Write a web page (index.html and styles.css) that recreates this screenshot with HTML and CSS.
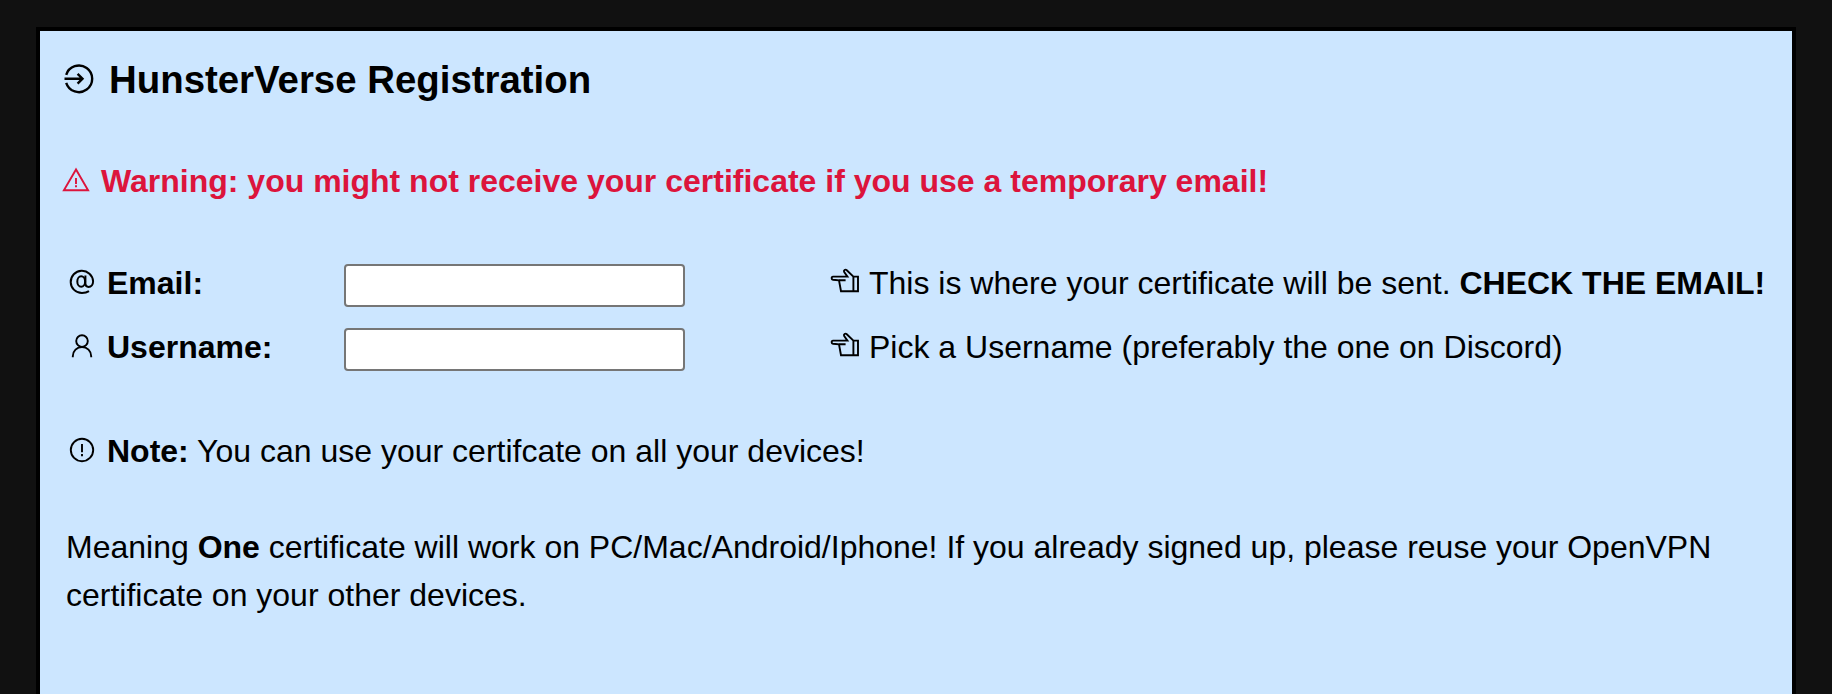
FILE: index.html
```
<!DOCTYPE html>
<html lang="en">
<head>
  <meta charset="UTF-8">
  <meta name="viewport" content="width=device-width, initial-scale=1.0">
  <title>HunsterVerse Registration</title>
  <link rel="stylesheet" href="styles.css">
</head>
<body>
  <main class="card">
    <h2 class="title">
      <svg class="icon icon-enter" viewBox="0 0 32 30">
        <path d="M2.2 10.8A13.3 13.3 0 1 1 2.2 18.8M.5 14.7H18M13.6 9.8l4.9 4.9-4.9 4.9"/>
      </svg>
      <span>HunsterVerse Registration</span>
    </h2>

    <h3 class="warning">
      <svg class="icon icon-warning" viewBox="0 0 28 26">
        <path d="M14 2.4L1.9 23.3H26.1ZM14 11v6M14 18.2v2"/>
      </svg>
      <span>Warning: you might not receive your certificate if you use a temporary email!</span>
    </h3>

    <form class="fields">
      <label class="label" for="email">
        <svg class="icon icon-at" viewBox="0 0 26 26">
          <path d="M20 22.2C17.8 23.6 15.6 24 13 24A11.2 11.1 0 1 1 24.1 12.3C24.1 15.6 22.2 17.9 19.6 17.9C17.6 17.9 16.4 16.8 16.4 14.8V6.6"/>
          <ellipse cx="12.2" cy="12.5" rx="3.9" ry="5.3"/>
        </svg>
        <span>Email:</span>
      </label>
      <input class="input" type="text" id="email" name="email">
      <div class="hint">
        <svg class="icon icon-hand" viewBox="0 0 30 26">
          <path d="M23.4 8.6L16.8 2.2C15.3 .9 13.2 2.3 14.2 4.1L17.4 8.6H3C1.2 8.6 1.2 11.6 3 11.8L9 12.3L11 23.2H28V8.6ZM23.4 8.6V23.2M9 12.3H15.6"/>
        </svg>
        <span>This is where your certificate will be sent. <b>CHECK THE EMAIL!</b></span>
      </div>

      <label class="label" for="username">
        <svg class="icon" viewBox="0 0 26 26">
          <circle cx="13" cy="8.1" r="5.8"/>
          <path d="M3.8 24.2v-1a9.2 9.2 0 0 1 18.4 0v1"/>
        </svg>
        <span>Username:</span>
      </label>
      <input class="input" type="text" id="username" name="username">
      <div class="hint">
        <svg class="icon icon-hand" viewBox="0 0 30 26">
          <path d="M23.4 8.6L16.8 2.2C15.3 .9 13.2 2.3 14.2 4.1L17.4 8.6H3C1.2 8.6 1.2 11.6 3 11.8L9 12.3L11 23.2H28V8.6ZM23.4 8.6V23.2M9 12.3H15.6"/>
        </svg>
        <span>Pick a Username (preferably the one on Discord)</span>
      </div>
    </form>

    <div class="note">
      <svg class="icon" viewBox="0 0 26 26">
        <circle cx="13" cy="13" r="11.2"/>
        <path d="M13 7v8.2M13 17v2.2"/>
      </svg>
      <span><b>Note:</b> You can use your certifcate on all your devices!</span>
    </div>

    <p class="text">Meaning <b>One</b> certificate will work on PC/Mac/Android/Iphone! If you already signed up, please reuse your OpenVPN certificate on your other devices.</p>
  </main>
</body>
</html>
```
FILE: styles.css
```
* { box-sizing: border-box; }

html, body {
  height: 100%;
  margin: 0;
}

body {
  padding: 27px 36px 0;
  background: #111;
  color: #000;
  font-family: Arial, "Liberation Sans", sans-serif;
  font-size: 32px;
  line-height: 48px;
}

.card {
  height: 100%;
  padding: 21px 20px 0 22px;
  background: #cce6ff;
  border: 4px solid #000;
  border-bottom: none;
}

/* headings */
.title, .warning {
  display: flex;
  align-items: flex-start;
  margin: 0;
}

.title {
  padding-left: 2px;
  font-size: 1.2em;
  line-height: 56px;
}

.warning {
  margin-top: 49px;
  font-size: 32px;
  color: crimson;
}

/* icons */
.icon {
  flex: none;
  width: 26px;
  height: 26px;
  margin: 10px 12px 0 0;
  fill: none;
  stroke: currentColor;
  stroke-width: 1.9;
}

.icon-enter {
  width: 32px;
  height: 30px;
  margin: 12px 13px 0 0;
  stroke-width: 2.4;
}

.icon-warning {
  width: 28px;
  height: 26px;
  margin: 10px 11px 0 0;
}

.icon-at { stroke-width: 2; }

.icon-hand {
  width: 30px;
  height: 26px;
  margin: 9px 9px 0 0;
  stroke-width: 1.9;
}

/* form */
.fields {
  display: grid;
  grid-template-columns: 275px 341px 1fr;
  row-gap: 16px;
  margin: 54px 0 0 7px;
}

.label, .hint, .note {
  display: flex;
  align-items: flex-start;
  white-space: nowrap;
}

.label { font-weight: bold; }

.input {
  width: 341px;
  height: 43px;
  margin: 5px 0 0;
  padding: 2px 4px;
  border: 2px solid #767676;
  border-radius: 4px;
  background: #fff;
  font: inherit;
}

.hint { padding-left: 145px; }

.note { margin: 56px 0 0 7px; }

.text { margin: 48px 0 0 4px; }
```
